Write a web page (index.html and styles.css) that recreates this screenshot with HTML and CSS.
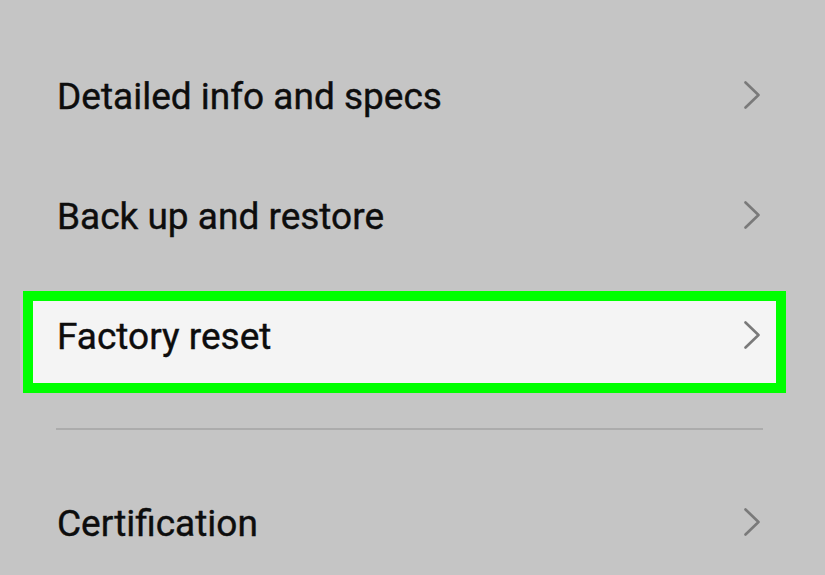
FILE: index.html
```html
<!DOCTYPE html>
<html lang="en">
<head>
<meta charset="utf-8">
<title>Settings</title>
<link rel="stylesheet" href="styles.css">
</head>
<body>
<div class="list">
  <div class="row">
    <span class="label">Detailed info and specs</span>
    <svg class="chev" width="16" height="28" viewBox="0 0 16 28"><polyline points="1.5,1.5 14.5,14 1.5,26.5"/></svg>
  </div>
  <div class="row">
    <span class="label">Back up and restore</span>
    <svg class="chev" width="16" height="28" viewBox="0 0 16 28"><polyline points="1.5,1.5 14.5,14 1.5,26.5"/></svg>
  </div>
  <div class="row hl">
    <span class="label">Factory reset</span>
    <svg class="chev" width="16" height="28" viewBox="0 0 16 28"><polyline points="1.5,1.5 14.5,14 1.5,26.5"/></svg>
  </div>
  <div class="divider"></div>
  <div class="row">
    <span class="label">Certification</span>
    <svg class="chev" width="16" height="28" viewBox="0 0 16 28"><polyline points="1.5,1.5 14.5,14 1.5,26.5"/></svg>
  </div>
</div>
</body>
</html>
```
FILE: styles.css
```css
html, body {
  margin: 0;
  padding: 0;
  background: #c5c5c5;
  overflow: hidden;
}
body {
  width: 825px;
  height: 575px;
  font-family: Roboto, "Liberation Sans", sans-serif;
}
.list {
  padding-top: 36px;
  display: flex;
  flex-direction: column;
}
.row {
  box-sizing: border-box;
  height: 120px;
  display: flex;
  align-items: center;
  justify-content: space-between;
  padding: 0 65px 0 57px;
  flex-shrink: 0;
}
.label {
  font-size: 37px;
  font-weight: 400;
  color: #0d0d0d;
  -webkit-text-stroke: 0.4px #0d0d0d;
}
.chev {
  display: block;
  margin-top: -2px;
}
.chev polyline {
  fill: none;
  stroke: #7a7a7a;
  stroke-width: 2.6;
  stroke-linecap: round;
  stroke-linejoin: round;
}
.row.hl {
  height: 102px;
  margin: 15px 39px 2px 23px;
  border: 10px solid #00ff00;
  background: #f4f4f4;
  padding: 0 16px 12px 24px;
}
.divider {
  height: 2px;
  background: #acacac;
  margin: 33px 62px 0 56px;
  flex-shrink: 0;
}
.divider + .row {
  margin-top: 33px;
}
```
